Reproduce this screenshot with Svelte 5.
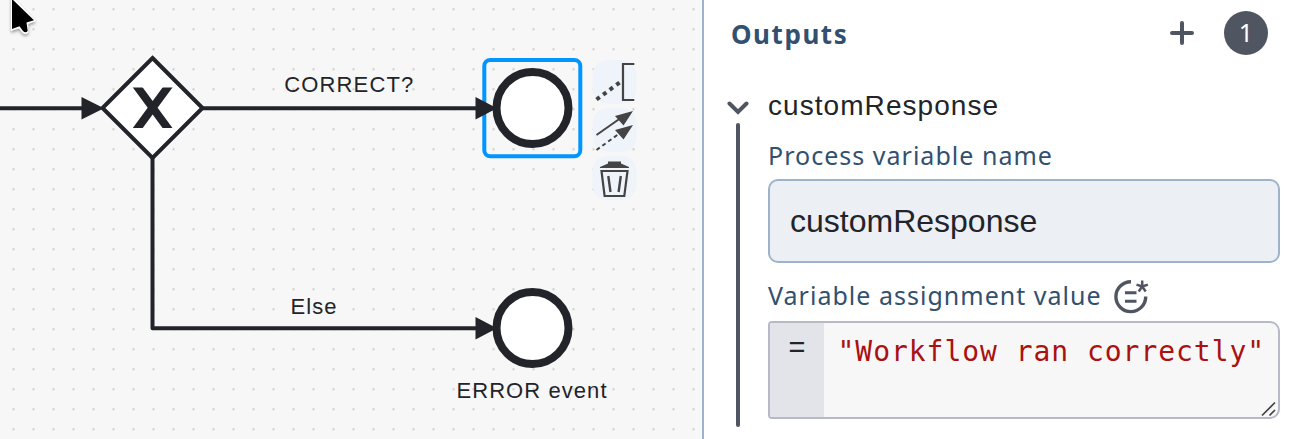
<script>
  let variableName = $state('customResponse');
  const expression = '"Workflow ran correctly"';
</script>

<main class="modeler">
  <section class="canvas">
    <svg width="702" height="439" viewBox="0 0 702 439">
      <defs>
        <pattern id="grid" x="3.5" y="-.7" width="20" height="20" patternUnits="userSpaceOnUse">
          <circle cx="10" cy="10" r="1.15" fill="#ccc" />
        </pattern>
        <clipPath id="cross"><rect x="130" y="87.500" width="46" height="40.500" /></clipPath>
      </defs>
      <rect width="702" height="439" fill="url(#grid)" />
      <g fill="#fff" fill-opacity=".95" stroke="#22242a">
        <path d="M152.5 58 202.5 108 152.5 158 102.5 108Z" stroke-width="4" />
        <circle cx="532.500" cy="108" r="36" stroke-width="8" />
        <circle cx="532.500" cy="328" r="36" stroke-width="8" />
      </g>
      <rect x="484.300" y="60" width="96" height="96.3" rx="6" fill="none" stroke="#0095ff" stroke-width="4" />
      <g fill="none" stroke="#22242a" stroke-width="4" stroke-linejoin="round">
        <path d="M0 108.2H84M203 108.2H478M152.5 158V328.2H478" />
        <path d="M135.700 84.700 169.600 130.800M169.600 84.700 135.700 130.800" stroke-width="8" clip-path="url(#cross)" />
      </g>
      <g fill="#22242a">
        <path d="M81.5 97 104 108.2 81.5 119.500ZM475.500 97 497 108.2 475.500 119.500ZM475.500 317 497 328.2 475.500 339.500Z" />
        <g class="label">
          <text x="284.300" y="92" textLength="130">CORRECT?</text>
          <text x="290.500" y="314" textLength="47">Else</text>
          <text x="456.500" y="398" textLength="151">ERROR event</text>
        </g>
      </g>
      <g fill="#eff3fa">
        <rect x="592.500" y="60" width="44" height="44" rx="15" />
        <rect x="592.500" y="108" width="44" height="44" rx="15" />
        <rect x="592.500" y="156" width="44" height="44" rx="15" />
      </g>
      <g fill="none" stroke="#444" stroke-width="2">
        <path d="M634.300 64H623V100H634.300" stroke-width="2.200" />
        <path d="M596.500 99.500 621 81.500" stroke-width="4" stroke-dasharray="4 4.200" />
        <path d="M596.500 135 620 118.500" />
        <path d="M596.500 150 620 133" stroke-dasharray="4 3.200" />
        <path d="M601.500 171H627.500L624.300 196H604.600Z" stroke-width="2.200" />
        <path d="M608.300 176 610.500 192M620.800 176 618.600 192" stroke-width="2.400" />
      </g>
      <g fill="#444">
        <path d="M633 111 615 116 623.500 125.500ZM633 125 615 130 623.500 139.500Z" />
        <path d="M600 168 600 167 608 163.500V161.500H621V163.500L629 167V168Z" />
      </g>
      <path class="pointer" d="M11-8V31L19 28.500 22.500 33Q25.500 35.500 28.500 32.500L28.300 24 36 21 11-5Z" fill="#fff" />
      <path d="M12-3V29L19.500 26.300 23 31Q25.500 33.500 27.700 31L26.500 22.500 34 20.300 12-1Z" fill="#000" />
    </svg>
  </section>

  <aside class="panel">
    <header>
      <h2>Outputs</h2>
      <div class="actions">
        <svg width="24" height="24" viewBox="0 0 24 24"><path d="M12 2V22M2 12H22" stroke="#505562" stroke-width="4" stroke-linecap="round" /></svg>
        <span class="count">1</span>
      </div>
    </header>
    <div class="item-head">
      <svg width="22" height="14" viewBox="0 0 22 14"><path d="M2.500 2.500 11 11 19.500 2.500" fill="none" stroke="#505562" stroke-width="4" stroke-linecap="round" /></svg>
      <span>customResponse</span>
    </div>
    <div class="item-body">
      <div class="rail"></div>
      <div class="fields">
        <label for="variable-name">Process variable name</label>
        <input id="variable-name" type="text" bind:value={variableName} spellcheck="false" />
        <div class="label-row">
          <span class="caption">Variable assignment value</span>
          <svg width="36" height="36" viewBox="0 0 36 36" fill="none" stroke="#505562">
            <path d="M18 3.800A14.900 14.900 0 1 0 32.700 18.500" stroke-width="3.400" />
            <path d="M12 14.700H23.500M12 23.200H23.500" stroke-width="3" />
            <path d="M29.200 8.500V2.500M29.200 8.500 34.900 6.600M29.200 8.500 32.700 13.400M29.200 8.500 25.700 13.400M29.200 8.500 23.500 6.600" stroke-width="2.500" />
          </svg>
        </div>
        <div class="editor">
          <span class="prefix">=</span>
          <code>{expression}</code>
          <svg class="grip" width="16" height="16" viewBox="0 0 16 16"><path d="M1 14.500 14 1.500M8.500 14.500 14 9" stroke="#444" stroke-width="1.700" /></svg>
        </div>
      </div>
    </div>
  </aside>
</main>

<style>
  :global(body) { margin: 0; overflow: hidden; }
  .modeler {
    display: grid;
    grid-template-columns: 702px 595px;
    height: 439px;
    font-family: "Liberation Sans", Arial, sans-serif;
    color: #22242a;
  }
  .canvas { background: #f7f7f7; overflow: hidden; }
  .canvas svg { display: block; }
  .label { font-size: 22px; letter-spacing: 1px; }
  .pointer { filter: drop-shadow(0 2px 1.500px rgb(0 0 0 / 35%)); }
  .panel {
    box-sizing: border-box;
    border-left: 2px solid #9db2cb;
    padding: 10px 17px 0 23px;
    background: #fff;
  }
  header { display: flex; justify-content: space-between; height: 46px; padding: 0 12px 0 4px; }
  h2 {
    margin: 0;
    font: 700 26px/49px "Noto Sans", sans-serif;
    letter-spacing: 1.550px;
    color: #32506f;
  }
  .actions { display: flex; align-items: center; gap: 30px; }
  .count {
    width: 44px;
    height: 44px;
    border-radius: 50%;
    background: #505562;
    color: #fff;
    font: 25px/43px "Noto Sans", sans-serif;
    text-align: center;
  }
  .item-head {
    display: flex;
    align-items: center;
    gap: 19px;
    height: 36px;
    margin-top: 31px;
    font-size: 28px;
    letter-spacing: 1.060px;
  }
  .item-head svg { margin-top: 6px; }
  .item-head span { padding-top: 2px; }
  .item-body { display: flex; gap: 28px; padding-left: 9px; }
  .rail { flex: none; width: 4px; height: 304px; border-radius: 2px; background: #505562; }
  .fields { flex: 1; min-width: 0; padding-top: 15px; }
  label, .caption {
    display: block;
    height: 34px;
    font: 25px/34px "Noto Sans", sans-serif;
    letter-spacing: 1.020px;
    color: #32506f;
  }
  .caption { height: 36px; }
  input {
    display: block;
    box-sizing: border-box;
    width: 100%;
    height: 84px;
    margin-top: 7px;
    padding: 0 20px;
    border: 2px solid #9db2cb;
    border-radius: 10px;
    background: #eceff4;
    font: 32px "Liberation Sans", Arial, sans-serif;
    color: #22242a;
    outline: none;
  }
  .label-row { display: flex; align-items: center; gap: 11px; height: 36px; margin-top: 15px; }
  .editor {
    position: relative;
    display: flex;
    box-sizing: border-box;
    height: 98px;
    margin-top: 7px;
    border: 2px solid #b8b9c8;
    border-radius: 4px 10px 10px 4px;
    background: #f7f7f7;
    overflow: hidden;
  }
  .prefix {
    width: 54px;
    background: #e2e4e9;
    text-align: center;
    font: 29px/54px "Liberation Mono", monospace;
  }
  code {
    padding-left: 13.500px;
    font: 28px/57px "DejaVu Sans Mono", monospace;
    letter-spacing: .960px;
    color: #a11;
    white-space: pre;
  }
  .grip { position: absolute; right: 1px; bottom: 0; }
</style>
